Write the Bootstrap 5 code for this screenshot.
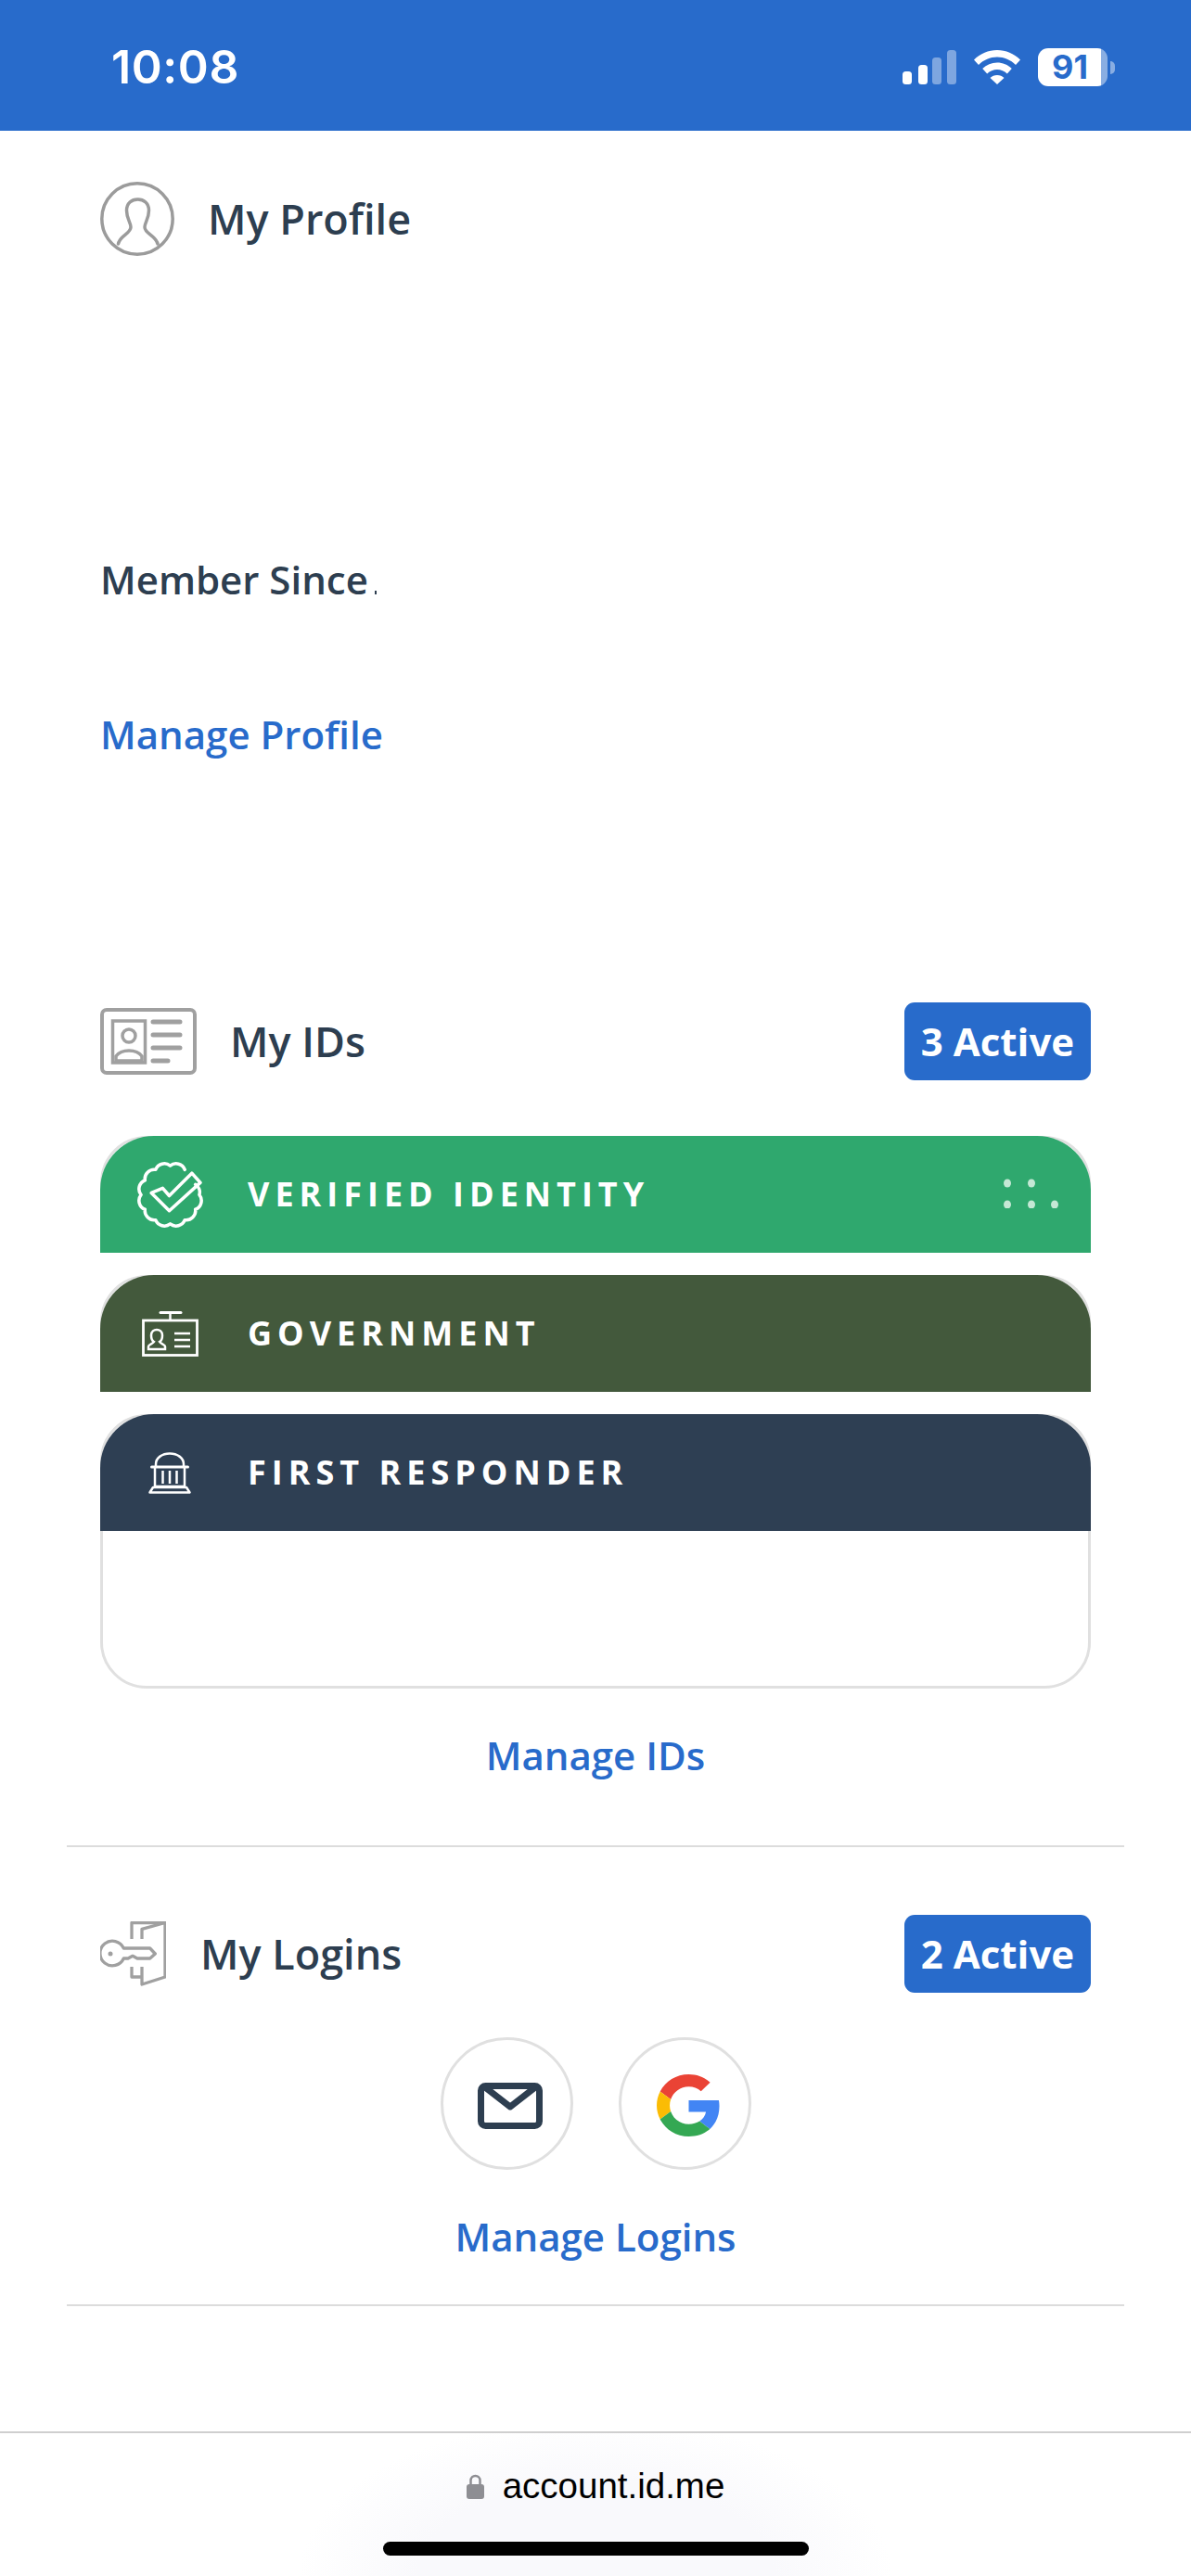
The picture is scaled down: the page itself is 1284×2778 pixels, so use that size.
<!DOCTYPE html>
<html lang="en">
<head>
  <meta charset="UTF-8" />
  <meta name="viewport" content="width=device-width, initial-scale=1.0"/>
  <title>My Account</title>
  <link href="https://cdn.jsdelivr.net/npm/bootstrap@5.3.3/dist/css/bootstrap.min.css" rel="stylesheet"/>
  <style>
    body {
      font-family: "Open Sans", sans-serif;
      color: #2d3e50;
      background: #fff;
    }

    /* status bar */
    .status-strip {
      height: 141px;
      background: #286bcb;
      padding: 0 82px 0 120px;
    }
    .status-time {
      font-family: Inter, sans-serif;
      font-size: 50px;
      font-weight: 600;
      line-height: 1;
      color: #fff;
      letter-spacing: .6px;
      margin-top: 2px;
    }
    .status-icons { margin-top: 4px; gap: 19px; }
    .batt-wrap { display: flex; align-items: center; }
    .batt-box {
      width: 75px;
      height: 41px;
      border-radius: 11px;
      background: linear-gradient(to right, #fff 68px, rgba(255,255,255,.45) 68px);
      color: #286bcb;
      font-family: Inter, sans-serif;
      font-size: 36px;
      font-weight: 700;
      line-height: 41px;
      text-align: center;
      padding-right: 6px;
    }
    .batt-nub {
      width: 5px;
      height: 14px;
      margin-left: 3px;
      border-radius: 0 5px 5px 0;
      background: rgba(255,255,255,.45);
    }

    /* page body */
    .page-body { padding: 0 108px; }
    .block-title {
      font-size: 45px;
      font-weight: 600;
      line-height: 60px;
      margin: 0;
    }
    .member-line { font-size: 42px; font-weight: 600; line-height: 60px; height: 60px; margin-top: 319px; }
    .tiny-dot {
      display: inline-block;
      width: 2px;
      height: 4px;
      margin-left: -4px;
      background: #2d3e50;
    }
    .blue-link {
      display: block;
      font-size: 42px;
      font-weight: 600;
      line-height: 60px;
      color: #286bcb;
      text-decoration: none;
    }
    .active-tag {
      width: 201px;
      height: 84px;
      border-radius: 11px;
      background: #286bcb;
      color: #fff;
      font-size: 42px;
      font-weight: 700;
      line-height: 84px;
      text-align: center;
    }
    .rule-wide {
      margin: 0 -36px;
      border: 0;
      border-top: 2px solid #dcdcdc;
      opacity: 1;
    }

    /* id cards */
    .id-card {
      border: 3px solid #e0e0e0;
      border-radius: 50px 50px 0 0;
      border-bottom: 0;
      margin-bottom: 24px;
    }
    .id-card.open-card { border-bottom: 3px solid #e0e0e0; border-radius: 50px; margin-bottom: 0; }
    .id-head {
      height: 126px;
      margin: -3px -3px 0;
      padding: 0;
      border: 0;
      border-radius: 58px 58px 0 0 !important;
      color: #fff;
      font-size: 36px;
      font-weight: 700;
      letter-spacing: 6px;
    }
    .id-icon { width: 159px; flex: none; padding-right: 9px; }
    .id-fill { height: 167px; }
    .bg-verified { background: #2fa86e; }
    .bg-gov { background: #43593c; }
    .bg-first { background: #2e3f53; }
    .dot-grid { margin-right: 34px; margin-top: -2px; }

    /* login circles */
    .login-circle {
      width: 143px;
      height: 143px;
      border: 3px solid #e0e0e0;
      border-radius: 50%;
    }

    /* bottom safari bar */
    .url-bar {
      height: 156px;
      border-top: 2px solid #cfcfcf;
      background: radial-gradient(ellipse 320px 170px at 50% 100%, #f9f9fc 60%, #fff 100%);
    }
    .url-text {
      font-family: "Liberation Sans", sans-serif;
      font-size: 38.5px;
      line-height: 40px;
      color: #000;
      margin-top: 37px;
      gap: 20px;
    }
    .home-pill {
      width: 459px;
      height: 15px;
      border-radius: 8px;
      background: #000;
      margin-top: 40px;
    }

    .mt-profile { margin-top: 55px; }
    .mt-manage-profile { margin-top: 107px; }
    .mt-ids { margin-top: 259px; }
    .mt-cards { margin-top: 60px; }
    .mt-manage-ids { margin-top: 42px; }
    .mt-rule-a { margin-top: 67px; }
    .mt-logins { margin-top: 73px; }
    .mt-circles { margin-top: 48px; }
    .mt-manage-logins { margin-top: 42px; }
    .mt-rule-b { margin-top: 43px; }
    .gap-logins { gap: 49px; }
    .title-gap { margin-left: 36px; }
    .title-gap-sm { margin-left: 37px; }
  </style>
</head>
<body class="d-flex flex-column min-vh-100">
  <!-- Status bar -->
  <div class="status-strip d-flex align-items-center justify-content-between">
    <div class="status-time">10:08</div>
    <div class="status-icons d-flex align-items-center">
      <svg width="58" height="37" viewBox="0 0 58 37" fill="#fff">
        <rect x="0" y="23" width="10" height="14" rx="3.5"/>
        <rect x="17" y="16" width="10" height="21" rx="3.5"/>
        <rect x="32" y="8" width="10" height="29" rx="3.5" opacity=".4"/>
        <rect x="48" y="0" width="10" height="37" rx="3.5" opacity=".4"/>
      </svg>
      <svg width="50" height="37" viewBox="0 0 50 37" fill="#fff">
        <path d="M25 0C15.500 0 7 3.700 0 10.500l5 5.500C10.500 10.500 17.500 7.500 25 7.500S39.500 10.500 45 16l5-5.500C43 3.700 34.500 0 25 0z"/>
        <path d="M25 13.500c-6 0-11.500 2.300-15.800 6.500l5 5.500c3-2.800 6.800-4.500 10.800-4.500s7.800 1.700 10.800 4.500l5-5.500C36.500 15.800 31 13.500 25 13.500z"/>
        <path d="M25 27c-3 0-5.500 1-7.500 3L25 37l7.500-7c-2-2-4.500-3-7.500-3z"/>
      </svg>
      <div class="batt-wrap">
        <div class="batt-box">91</div>
        <div class="batt-nub"></div>
      </div>
    </div>
  </div>

  <!-- Main content -->
  <div class="page-body">
    <div class="d-flex align-items-center mt-profile">
      <svg width="80" height="80" viewBox="0 0 80 80" fill="none" stroke="#9b9b9b" stroke-width="3.5">
        <circle cx="40" cy="40" r="38.200"/>
        <path d="M19.500 67C21 58 33 56 33 49C33 44 28.500 40 28.500 31C28.500 23 34 19 40.500 19C47 19 52.500 23 52.500 31C52.500 40 48 44 48 49C48 56 60 58 62 67" stroke-linecap="round"/>
      </svg>
      <h2 class="block-title title-gap">My Profile</h2>
    </div>

    <div class="member-line">Member Since <span class="tiny-dot"></span></div>
    <a href="#" class="blue-link mt-manage-profile">Manage Profile</a>

    <!-- My IDs -->
    <div class="d-flex align-items-center justify-content-between mt-ids">
      <div class="d-flex align-items-center">
        <svg width="104" height="72" viewBox="0 0 104 72" fill="none" stroke="#a0a0a0" stroke-width="4">
          <rect x="2" y="2" width="100" height="68" rx="5"/>
          <rect x="13.500" y="14" width="35" height="45" stroke-width="3.500"/>
          <circle cx="31" cy="30" r="7" stroke-width="3.500"/>
          <path d="M17 57v-5c3-4 8-6 14-6s11 2 14 6v5z" stroke-width="3.500"/>
          <path d="M57 15h29M57 29h29M57 43h29M57 57h16" stroke-width="5" stroke-linecap="round"/>
        </svg>
        <h2 class="block-title title-gap">My IDs</h2>
      </div>
      <div class="active-tag">3 Active</div>
    </div>

    <div class="mt-cards">
      <div class="card id-card">
        <div class="card-header id-head bg-verified d-flex align-items-center">
          <div class="id-icon d-flex justify-content-center">
            <svg width="71" height="71" viewBox="0 0 70 70" fill="none" stroke="#fff" stroke-width="3.500" stroke-linejoin="round" stroke-linecap="round">
              <path d="M61.800 24A10 10 0 0 1 66 35A10 10 0 0 1 61.800 50.500A10 10 0 0 1 50.500 61.800A10 10 0 0 1 35 66A10 10 0 0 1 19.500 61.800A10 10 0 0 1 8.200 50.500A10 10 0 0 1 4 35A10 10 0 0 1 8.200 19.500A10 10 0 0 1 19.500 8.200A10 10 0 0 1 35 4A10 10 0 0 1 50.500 8.200"/>
              <path d="M27 28L34 36L58 12L67 22L34 52L15 33z"/>
            </svg>
          </div>
          <span class="flex-grow-1">VERIFIED IDENTITY</span>
          <svg class="dot-grid" width="60" height="32" viewBox="0 0 60 32" fill="#c5e8d5">
            <ellipse cx="4" cy="5" rx="4" ry="4.500"/><ellipse cx="30" cy="5" rx="4" ry="4.500"/>
            <ellipse cx="4" cy="28" rx="4" ry="4.500"/><ellipse cx="30" cy="28" rx="4" ry="4.500"/><ellipse cx="55" cy="28" rx="4" ry="4.500"/>
          </svg>
        </div>
      </div>

      <div class="card id-card">
        <div class="card-header id-head bg-gov d-flex align-items-center">
          <div class="id-icon d-flex justify-content-center">
            <svg width="61" height="49" viewBox="0 0 61 49" fill="none" stroke="#fff" stroke-width="2.500">
              <path d="M20 1.500h22" stroke-width="3" stroke-linecap="round"/>
              <path d="M30.500 2v8"/>
              <rect x="1.500" y="10" width="58" height="37.500" stroke-width="2.800"/>
              <path d="M7 41v-3c0-2 5-3 6-5c-2-1-3-4-3-7c0-4 3-6 6-6s6 2 6 6c0 3-1 6-3 7c1 2 6 3 6 5v3z"/>
              <path d="M35 24h17M35 31h17M35 38h17"/>
            </svg>
          </div>
          <span>GOVERNMENT</span>
        </div>
      </div>

      <div class="card id-card open-card">
        <div class="card-header id-head bg-first d-flex align-items-center">
          <div class="id-icon d-flex justify-content-center">
            <svg width="46" height="45" viewBox="0 0 46 45" fill="none" stroke="#fff" stroke-width="2.500" stroke-linejoin="round">
              <path d="M8 16V13C8 6 15 1.500 23 1.500S38 6 38 13V16"/>
              <path d="M3.500 16h39" stroke-width="3" stroke-linecap="round"/>
              <path d="M7 16v21M39 16v21M15.500 20v14M23 20v14M30.500 20v14" />
              <path d="M7 37h32M1.500 43.500L5 38h36l3.500 5.500z"/>
            </svg>
          </div>
          <span>FIRST RESPONDER</span>
        </div>
        <div class="card-body id-fill"></div>
      </div>
    </div>

    <a href="#" class="blue-link text-center mt-manage-ids">Manage IDs</a>
    <hr class="rule-wide mt-rule-a mb-0">

    <!-- My Logins -->
    <div class="d-flex align-items-center justify-content-between mt-logins">
      <div class="d-flex align-items-center">
        <svg width="71" height="70" viewBox="0 0 71 70" fill="none" stroke="#a0a0a0" stroke-width="3.300" stroke-linejoin="round">
          <path d="M34 19V1.500H70V60L45 68V49"/>
          <path d="M45 19V8.300L70 1.500"/>
          <path d="M34 49V60H45"/>
          <path d="M25.300 29H53.700L59.300 35L53.700 40H40L35 37.300L30 40H25.300A13.300 13.300 0 1 1 25.300 29z"/>
          <circle cx="11" cy="35" r="2.500" fill="#a0a0a0" stroke="none"/>
        </svg>
        <h2 class="block-title title-gap-sm">My Logins</h2>
      </div>
      <div class="active-tag">2 Active</div>
    </div>

    <div class="d-flex justify-content-center gap-logins mt-circles">
      <div class="login-circle d-flex align-items-center justify-content-center ps-2 pt-1">
        <svg width="70" height="50" viewBox="0 0 70 50" fill="none" stroke="#2d3e50" stroke-width="7" stroke-linejoin="round" stroke-linecap="round">
          <rect x="3.500" y="3.500" width="63" height="43" rx="5"/>
          <path d="M8 5L35 26L62 5"/>
        </svg>
      </div>
      <div class="login-circle d-flex align-items-center justify-content-center ps-2 pt-1">
        <svg width="69" height="67" viewBox="0 0 48 48" preserveAspectRatio="none">
          <path fill="#EA4335" d="M24 9.500c3.540 0 6.710 1.220 9.210 3.600l6.850-6.850C35.900 2.380 30.470 0 24 0 14.620 0 6.510 5.380 2.560 13.220l7.980 6.190C12.430 13.720 17.740 9.500 24 9.500z"/>
          <path fill="#4285F4" d="M46.980 24.550c0-1.570-.15-3.090-.38-4.550H24v9.020h12.940c-.58 2.960-2.260 5.480-4.780 7.180l7.730 6c4.510-4.180 7.090-10.360 7.090-17.650z"/>
          <path fill="#FBBC05" d="M10.530 28.590c-.48-1.450-.76-2.990-.76-4.590s.27-3.140.76-4.590l-7.980-6.190C.92 16.460 0 20.120 0 24c0 3.880.92 7.540 2.560 10.780l7.970-6.190z"/>
          <path fill="#34A853" d="M24 48c6.480 0 11.930-2.130 15.890-5.810l-7.730-6c-2.150 1.450-4.920 2.300-8.160 2.300-6.260 0-11.570-4.220-13.470-9.910l-7.980 6.190C6.510 42.620 14.620 48 24 48z"/>
        </svg>
      </div>
    </div>

    <a href="#" class="blue-link text-center mt-manage-logins">Manage Logins</a>
    <hr class="rule-wide mt-rule-b mb-0">
  </div>

  <!-- Browser url bar -->
  <div class="url-bar mt-auto d-flex flex-column align-items-center">
    <div class="url-text d-flex align-items-center">
      <svg width="19" height="27" viewBox="0 0 19 27" fill="none">
        <path d="M4.500 12V7a5 5 0 0 1 10 0v5" stroke="#8e8e93" stroke-width="2.500"/>
        <rect x="0" y="11" width="19" height="16" rx="3" fill="#8e8e93"/>
      </svg>
      account.id.me
    </div>
    <div class="home-pill"></div>
  </div>
</body>
</html>
